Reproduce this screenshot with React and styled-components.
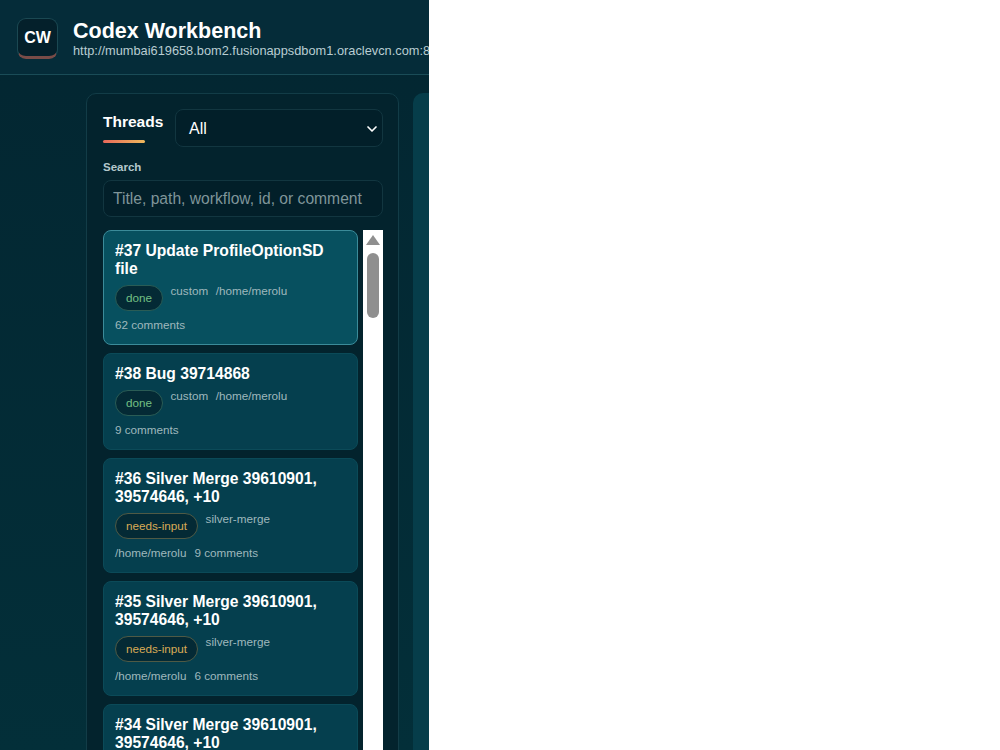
import styled, { createGlobalStyle } from "styled-components";
import { ChevronDown } from "lucide-react";

const GlobalStyle = createGlobalStyle`
  html, body {
    margin: 0;
    padding: 0;
    background: #fff;
    font-family: "Liberation Sans", Arial, sans-serif;
  }
  * { box-sizing: border-box; }
`;

const Shell = styled.div`
  width: 429px;
  height: 750px;
  overflow: hidden;
  background: linear-gradient(180deg, #032631 0%, #032f39 100%);
  color: #fff;
`;

const Header = styled.header`
  height: 75px;
  padding: 18px 0 0 17px;
  display: flex;
  gap: 15px;
  background: #052c39;
  border-bottom: 1px solid #1a4c57;
  white-space: nowrap;
`;

const Logo = styled.div`
  width: 41px;
  height: 41px;
  flex: none;
  display: flex;
  align-items: center;
  justify-content: center;
  border-radius: 9px;
  background: #04202b;
  border: 1px solid #1b4852;
  border-bottom: 3px solid #7a4c48;
  font-size: 16px;
  font-weight: 700;
`;

const HeadText = styled.div`
  display: flex;
  flex-direction: column;
`;

const Title = styled.h1`
  margin: 0;
  font-size: 21.5px;
  line-height: 26px;
  font-weight: 700;
`;

const Url = styled.div`
  font-size: 12.8px;
  line-height: 14px;
  color: #b9cdd2;
`;

const Main = styled.main`
  display: flex;
  gap: 14px;
  padding: 18px 0 0 86px;
`;

const Sidebar = styled.section`
  width: 313px;
  flex: none;
  height: 700px;
  padding: 15px 15px 0 16px;
  background: #03232d;
  border: 1px solid #123c47;
  border-radius: 10px;
`;

const NextPanel = styled.section`
  flex: 1;
  height: 700px;
  background: #063d4a;
  border-radius: 10px 0 0 10px;
`;

const TopRow = styled.div`
  display: flex;
  gap: 12px;
`;

const TabLabel = styled.div`
  position: relative;
  width: 60px;
  height: 38px;
  padding-top: 4px;
  font-size: 15.5px;
  line-height: 18px;
  font-weight: 700;
  &::after {
    content: "";
    position: absolute;
    left: 0;
    top: 31px;
    width: 42px;
    height: 3px;
    border-radius: 2px;
    background: linear-gradient(90deg, #e8685a, #efb95c);
  }
`;

const SelectBox = styled.div`
  flex: 1;
  height: 38px;
  padding: 1px 2px 0 13px;
  display: flex;
  align-items: center;
  justify-content: space-between;
  background: #021f29;
  border: 1px solid #123640;
  border-radius: 8px;
  font-size: 16px;
`;

const SearchLabel = styled.label`
  display: block;
  margin-top: 13px;
  font-size: 11.5px;
  line-height: 14px;
  font-weight: 700;
  color: #b4c8cc;
`;

const SearchInput = styled.input`
  display: block;
  width: 100%;
  height: 37px;
  margin-top: 6px;
  padding: 0 9px;
  background: #021f29;
  border: 1px solid #123640;
  border-radius: 8px;
  outline: none;
  font: 15.65px "Liberation Sans", Arial, sans-serif;
  color: #fff;
  &::placeholder {
    color: #7f9599;
    opacity: 1;
  }
`;

const ListRow = styled.div`
  display: flex;
  gap: 5px;
  margin-top: 13px;
`;

const CardList = styled.div`
  width: 255px;
  flex: none;
  display: flex;
  flex-direction: column;
  gap: 8px;
`;

const Card = styled.article`
  padding: 11px 11px 12px;
  border-radius: 8px;
  background: ${(p) => (p.$active ? "#07505f" : "#053f4e")};
  border: 1px solid ${(p) => (p.$active ? "#3b8b99" : "#0b4a58")};
`;

const CardTitle = styled.h3`
  margin: 0;
  font-size: 15.65px;
  line-height: 18px;
  font-weight: 700;
`;

const Meta = styled.div`
  display: flex;
  flex-wrap: wrap;
  column-gap: 7.5px;
  margin-top: 7px;
  font-size: 11.7px;
  line-height: 11px;
  color: #9fb8bd;
`;

const Pill = styled.span`
  height: 26px;
  padding: 0 10px 2px;
  display: inline-flex;
  align-items: center;
  border-radius: 13px;
  background: #042a35;
  border: 1px solid ${(p) => (p.$warn ? "#4f5a45" : "#2a5c55")};
  color: ${(p) => (p.$warn ? "#d9aa55" : "#73c084")};
`;

const MetaLine = styled.div`
  display: flex;
  gap: 8px;
  margin-top: 7px;
  font-size: 11.7px;
  line-height: 14px;
  color: #9fb8bd;
`;

const Scrollbar = styled.div`
  width: 20px;
  flex: none;
  height: 600px;
  padding-top: 5px;
  display: flex;
  flex-direction: column;
  align-items: center;
  background: #fff;
`;

const UpArrow = styled.div`
  width: 0;
  height: 0;
  border-left: 7px solid transparent;
  border-right: 7px solid transparent;
  border-bottom: 10px solid #8f8f8f;
`;

const Thumb = styled.div`
  width: 12px;
  height: 65px;
  margin-top: 8px;
  border-radius: 6px;
  background: #8f8f8f;
`;

const threads = [
  { id: 37, title: "Update ProfileOptionSD file", status: "done", flow: "custom", comments: 62, active: true },
  { id: 38, title: "Bug 39714868", status: "done", flow: "custom", comments: 9 },
  { id: 36, title: "Silver Merge 39610901, 39574646, +10", status: "needs-input", flow: "silver-merge", comments: 9 },
  { id: 35, title: "Silver Merge 39610901, 39574646, +10", status: "needs-input", flow: "silver-merge", comments: 6 },
  { id: 34, title: "Silver Merge 39610901, 39574646, +10", status: "needs-input", flow: "silver-merge", comments: 6 },
];

const ThreadCard = ({ thread }) => {
  const warn = thread.status === "needs-input";
  return (
    <Card $active={thread.active}>
      <CardTitle>
        #{thread.id} {thread.title}
      </CardTitle>
      <Meta>
        <Pill $warn={warn}>{thread.status}</Pill>
        <span>{thread.flow}</span>
        {!warn && <span>/home/merolu</span>}
      </Meta>
      <MetaLine>
        {warn && <span>/home/merolu</span>}
        <span>{thread.comments} comments</span>
      </MetaLine>
    </Card>
  );
};

export default function App() {
  return (
    <Shell>
      <GlobalStyle />
      <Header>
        <Logo>CW</Logo>
        <HeadText>
          <Title>Codex Workbench</Title>
          <Url>http://mumbai619658.bom2.fusionappsdbom1.oraclevcn.com:8</Url>
        </HeadText>
      </Header>
      <Main>
        <Sidebar>
          <TopRow>
            <TabLabel>Threads</TabLabel>
            <SelectBox>
              All
              <ChevronDown size={16} strokeWidth={2.5} />
            </SelectBox>
          </TopRow>
          <SearchLabel htmlFor="search">Search</SearchLabel>
          <SearchInput id="search" placeholder="Title, path, workflow, id, or comment" />
          <ListRow>
            <CardList>
              {threads.map((t) => (
                <ThreadCard key={t.id} thread={t} />
              ))}
            </CardList>
            <Scrollbar>
              <UpArrow />
              <Thumb />
            </Scrollbar>
          </ListRow>
        </Sidebar>
        <NextPanel />
      </Main>
    </Shell>
  );
}
